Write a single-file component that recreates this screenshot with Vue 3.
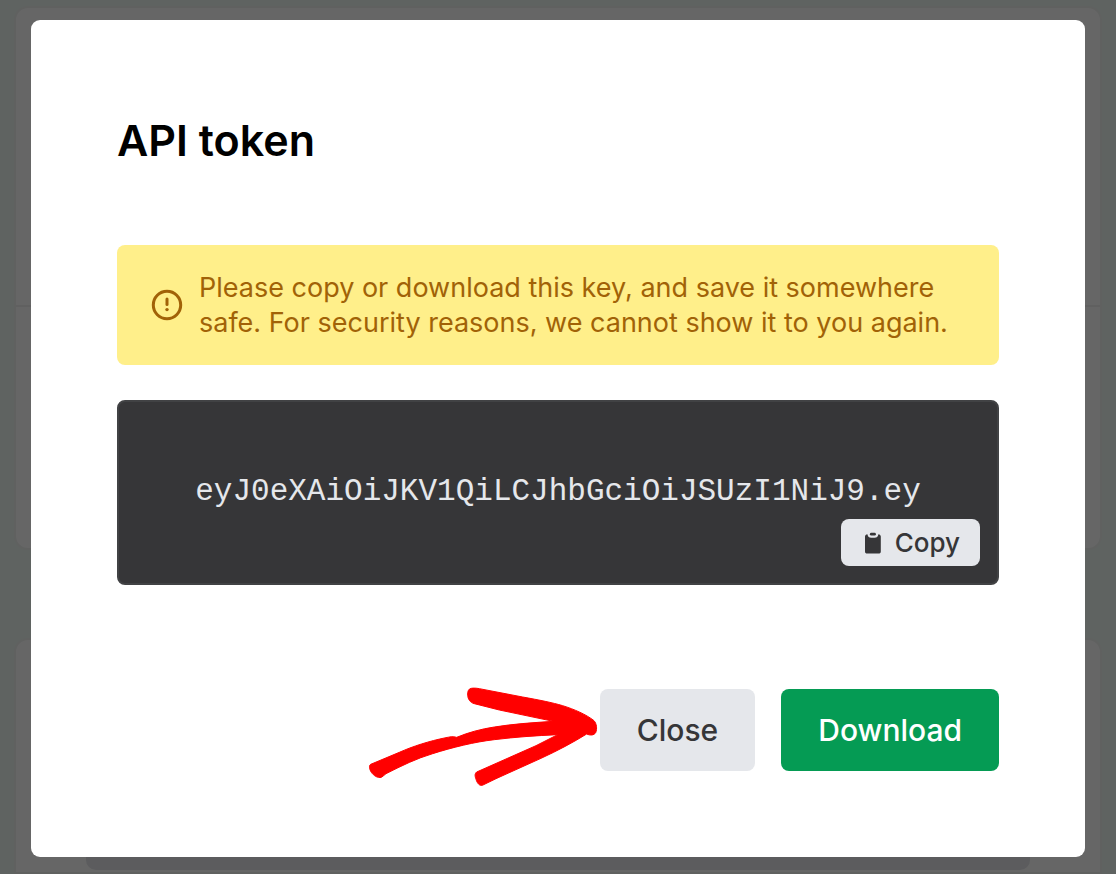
<script setup>
import { ref } from 'vue'

const open = ref(true)
const token = 'eyJ0eXAiOiJKV1QiLCJhbGciOiJSUzI1NiJ9.ey'

function copyToken() {
  navigator.clipboard?.writeText(token)
}

function downloadToken() {
  const url = URL.createObjectURL(new Blob([token], { type: 'text/plain' }))
  const link = document.createElement('a')
  link.href = url
  link.download = 'api-token.txt'
  link.click()
  URL.revokeObjectURL(url)
}
</script>

<template>
  <div class="page">
    <div class="panels" aria-hidden="true">
      <section class="panel">
        <div class="panel-head"></div>
        <div class="panel-body"></div>
      </section>
      <section class="panel lower">
        <div class="well"></div>
      </section>
    </div>

    <div v-if="open" class="overlay">
      <div class="dialog" role="dialog" aria-modal="true" aria-labelledby="dialog-title">
        <h1 id="dialog-title">API token</h1>

        <div class="notice" role="alert">
          <svg class="notice-icon" viewBox="0 0 32 32" aria-hidden="true">
            <circle cx="16" cy="16" r="13.7" fill="none" stroke="currentColor" stroke-width="3" />
            <path d="M16 10v5.6" fill="none" stroke="currentColor" stroke-width="3" stroke-linecap="round" />
            <circle cx="16" cy="20.6" r="1.7" fill="currentColor" />
          </svg>
          <p>Please copy or download this key, and save it somewhere safe. For security reasons, we cannot show it to you again.</p>
        </div>

        <div class="token">
          <code>{{ token }}</code>
          <button type="button" class="copy" @click="copyToken">
            <svg class="copy-icon" viewBox="0 0 18 22" aria-hidden="true">
              <path d="M3.4 2.2C2 2.2 1 3.1 1 4.6V19.4C1 20.7 1.8 21.5 3.2 21.5H14.6C16 21.5 16.8 20.7 16.8 19.4V4.6C16.8 3.1 15.8 2.2 14.4 2.2C14 4.6 12.7 5.8 10.6 5.8H7.2C5.1 5.8 3.8 4.6 3.4 2.2Z" fill="currentColor" />
              <rect x="5.9" y="0.8" width="6" height="2.8" rx="1.4" fill="currentColor" />
            </svg>
            Copy
          </button>
        </div>

        <div class="actions">
          <div class="close-wrap">
            <svg class="arrow" viewBox="42 33 690 306" aria-hidden="true">
              <path
                d="M346 40C338 41 334 49 335 61C336 72 342 83 355 86L430 105L592 139C530 143 470 147 415 156C375 162 335 173 302 187C290 183 281 186 270 188C220 198 170 214 130 232L44 268C38 272 40 282 46 292C53 302 65 310 76 307C82 304 85 299 90 296C140 271 180 251 230 236C290 217 355 201 415 194C480 186 540 182 605 179L540 212L362 291C355 297 357 304 360 313C364 326 371 333 379 331L420 311L555 250C605 227 652 202 692 177C703 182 714 181 719 173C724 161 722 146 714 137C690 118 655 103 620 92C590 83 550 75 500 66L370 41C360 39 352 39 346 40Z"
                fill="#ff0000"
                stroke="#ff0000"
                stroke-width="3"
                stroke-linejoin="round"
              />
            </svg>
            <button type="button" class="button close" @click="open = false">Close</button>
          </div>
          <button type="button" class="button download" @click="downloadToken">Download</button>
        </div>
      </div>
    </div>
  </div>
</template>

<style>
body {
  background: #edf7f2;
}
</style>

<style scoped>
.page {
  min-height: 100vh;
  background: #edf7f2;
  font-family: Inter, "Liberation Sans", sans-serif;
}

.panels {
  display: flex;
  flex-direction: column;
  gap: 88px;
  padding: 6px 14px 0;
}

.panel {
  background: #ffffff;
  border: 2px solid #eff3f1;
  border-radius: 14px;
}

.panel-head {
  height: 297px;
  border-bottom: 2px solid #f0f0f0;
}

.panel-body {
  height: 241px;
}

.lower {
  padding: 0 70px 2px;
  border-radius: 14px 14px 0 0;
}

.well {
  height: 230px;
  border-radius: 10px;
  background: #e5e6eb;
}

.overlay {
  position: fixed;
  inset: 0;
  overflow: auto;
  box-sizing: border-box;
  padding: 20px 31px 16px;
  background: rgba(0, 0, 0, 0.6);
}

.dialog {
  box-sizing: border-box;
  padding: 86px;
  border-radius: 9px;
  background: #ffffff;
}

h1 {
  margin: 0 0 71px;
  color: #000000;
  font-size: 43px;
  font-weight: 600;
  line-height: 68px;
}

.notice {
  display: flex;
  align-items: center;
  gap: 16px;
  margin-bottom: 35px;
  padding: 25px 34px;
  border-radius: 8px;
  background: #ffef8a;
  color: #a16207;
}

.notice-icon {
  flex: none;
  width: 32px;
  height: 32px;
}

.notice p {
  margin: 0;
  font-size: 27px;
  line-height: 35px;
}

.token {
  position: relative;
  margin-bottom: 104px;
  padding: 70px 70px 71px;
  border: 2px solid #414244;
  border-radius: 8px;
  background: #363638;
  color: #e5e7eb;
  text-align: center;
}

.token code {
  display: block;
  font-family: "Liberation Mono", monospace;
  font-size: 31px;
  line-height: 40px;
}

button {
  border: 0;
  font-family: inherit;
  font-weight: 500;
  cursor: pointer;
}

.copy {
  position: absolute;
  right: 17px;
  bottom: 17px;
  display: flex;
  align-items: center;
  gap: 13px;
  padding: 6px 20px 6px 23px;
  border-radius: 8px;
  background: #e5e7eb;
  color: #363638;
  font-size: 26px;
  line-height: 35px;
}

.copy-icon {
  width: 18px;
  height: 22px;
}

.actions {
  display: flex;
  justify-content: flex-end;
  gap: 26px;
}

.close-wrap {
  position: relative;
}

.arrow {
  position: absolute;
  top: -3px;
  right: 100%;
  width: 230px;
  height: 102px;
  overflow: visible;
  pointer-events: none;
}

.button {
  padding: 21px 37px;
  border-radius: 8px;
  font-size: 30px;
  line-height: 40px;
}

.close {
  background: #e5e7eb;
  color: #363638;
}

.download {
  background: #059b54;
  color: #ffffff;
}
</style>
